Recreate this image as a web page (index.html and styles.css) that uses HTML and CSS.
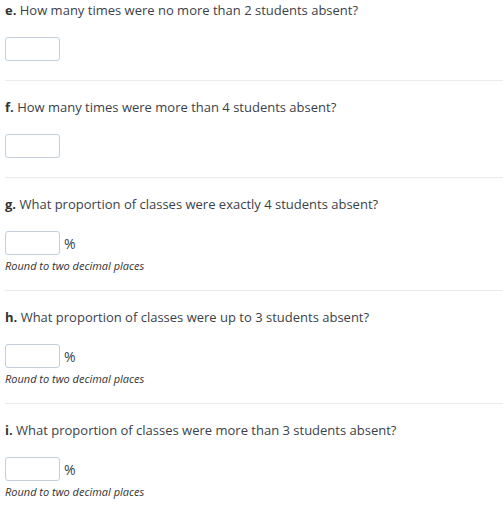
FILE: index.html
```html
<!DOCTYPE html>
<html>
<head>
<meta charset="utf-8">
<link rel="stylesheet" href="styles.css">
</head>
<body>
<div class="page">
  <section class="q first">
    <p class="text"><b>e.</b> How many times were no more than 2 students absent?</p>
    <div class="answer"><input class="box" type="text"></div>
  </section>
  <section class="q">
    <p class="text"><b>f.</b> How many times were more than 4 students absent?</p>
    <div class="answer"><input class="box" type="text"></div>
  </section>
  <section class="q with-hint">
    <p class="text"><b>g.</b> What proportion of classes were exactly 4 students absent?</p>
    <div class="answer"><input class="box" type="text"><span class="unit">%</span></div>
    <p class="hint">Round to two decimal places</p>
  </section>
  <section class="q with-hint">
    <p class="text"><b>h.</b> What proportion of classes were up to 3 students absent?</p>
    <div class="answer"><input class="box" type="text"><span class="unit">%</span></div>
    <p class="hint">Round to two decimal places</p>
  </section>
  <section class="q with-hint">
    <p class="text"><b>i.</b> What proportion of classes were more than 3 students absent?</p>
    <div class="answer"><input class="box" type="text"><span class="unit">%</span></div>
    <p class="hint">Round to two decimal places</p>
  </section>
</div>
</body>
</html>
```
FILE: styles.css
```css
html, body {
  margin: 0;
  padding: 0;
  background: #fff;
}
body {
  font-family: "Open Sans", "Noto Sans", sans-serif;
  color: #333;
  font-size: 13px;
}
.page {
  padding-left: 5px;
}
.q {
  border-top: 1px solid #ebebeb;
  padding: 16px 0 19px;
}
.q.first {
  border-top: none;
  padding-top: 0;
}
.q.with-hint {
  padding-bottom: 16px;
}
.text {
  margin: 0;
  line-height: 20px;
  height: 20px;
  color: #3b3f4a;
}
.text b {
  color: #333;
  font-weight: 700;
}
.answer {
  margin-top: 17px;
  display: flex;
  align-items: center;
  height: 24px;
}
.box {
  box-sizing: border-box;
  width: 55px;
  height: 24px;
  margin: 0;
  border: 1px solid #c3d0dc;
  border-radius: 3px;
  background: #fff;
  padding: 0 4px;
  font: inherit;
}
.unit {
  margin-left: 4px;
  font-size: 14px;
  color: #3b3f4a;
}
.hint {
  margin: 3px 0 0;
  font-size: 11px;
  font-style: italic;
  line-height: 16px;
  color: #333;
}
```
